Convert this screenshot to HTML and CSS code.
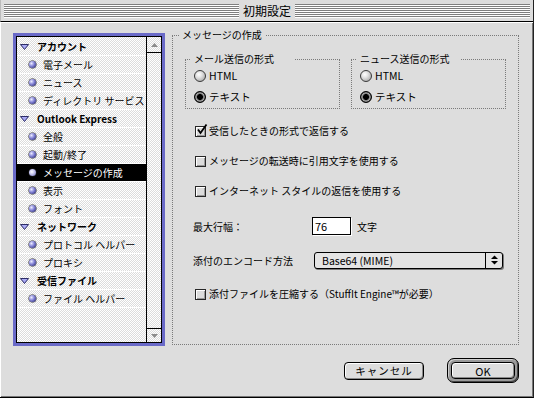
FILE: index.html
```html
<!DOCTYPE html>
<html lang="ja">
<head>
<meta charset="utf-8">
<title>初期設定</title>
<link rel="stylesheet" href="styles.css">
</head>
<body>
<div class="window">
  <div class="titlebar"><span class="title">初期設定</span></div>
  <div class="content">
    <div class="listbox">
      <div class="listinner">
        <ul class="list">
          <li class="hdr"><svg class="tri" width="9" height="6" viewBox="0 0 9 6"><polygon points="0.5,0.5 8.5,0.5 4.5,5.5" fill="#a8a8f4" stroke="#2c2c66" stroke-width="1"/></svg>アカウント</li>
          <li class="item"><span class="dot"></span>電子メール</li>
          <li class="item"><span class="dot"></span>ニュース</li>
          <li class="item"><span class="dot"></span>ディレクトリ サービス</li>
          <li class="hdr latin"><svg class="tri" width="9" height="6" viewBox="0 0 9 6"><polygon points="0.5,0.5 8.5,0.5 4.5,5.5" fill="#a8a8f4" stroke="#2c2c66" stroke-width="1"/></svg>Outlook Express</li>
          <li class="item"><span class="dot"></span>全般</li>
          <li class="item"><span class="dot"></span>起動/終了</li>
          <li class="item sel"><span class="dot"></span>メッセージの作成</li>
          <li class="item"><span class="dot"></span>表示</li>
          <li class="item"><span class="dot"></span>フォント</li>
          <li class="hdr"><svg class="tri" width="9" height="6" viewBox="0 0 9 6"><polygon points="0.5,0.5 8.5,0.5 4.5,5.5" fill="#a8a8f4" stroke="#2c2c66" stroke-width="1"/></svg>ネットワーク</li>
          <li class="item"><span class="dot"></span>プロトコル ヘルパー</li>
          <li class="item"><span class="dot"></span>プロキシ</li>
          <li class="hdr"><svg class="tri" width="9" height="6" viewBox="0 0 9 6"><polygon points="0.5,0.5 8.5,0.5 4.5,5.5" fill="#a8a8f4" stroke="#2c2c66" stroke-width="1"/></svg>受信ファイル</li>
          <li class="item"><span class="dot"></span>ファイル ヘルパー</li>
        </ul>
        <div class="scroll">
          <div class="sarrow up"><svg width="7" height="4" viewBox="0 0 7 4"><polygon points="0,4 3.5,0 7,4" fill="#8c8c8c"/></svg></div>
          <div class="track"></div>
          <div class="sarrow down"><svg width="7" height="4" viewBox="0 0 7 4"><polygon points="0,0 7,0 3.5,4" fill="#8c8c8c"/></svg></div>
        </div>
      </div>
    </div>

    <div class="group main">
      <span class="legend">メッセージの作成</span>
      <div class="formats">
        <div class="group sub">
          <span class="legend">メール送信の形式</span>
          <div class="radio-row"><span class="radio"></span>HTML</div>
          <div class="radio-row"><span class="radio on"></span>テキスト</div>
        </div>
        <div class="group sub">
          <span class="legend">ニュース送信の形式</span>
          <div class="radio-row"><span class="radio"></span>HTML</div>
          <div class="radio-row"><span class="radio on"></span>テキスト</div>
        </div>
      </div>
      <div class="opts">
        <div class="check-row first"><span class="check on"><svg class="mark" width="12" height="12" viewBox="0 0 12 12"><polyline points="2,5.5 4.5,9 10.5,0.5" fill="none" stroke="#000" stroke-width="1.8"/></svg></span>受信したときの形式で返信する</div>
        <div class="check-row"><span class="check"></span>メッセージの転送時に引用文字を使用する</div>
        <div class="check-row"><span class="check"></span>インターネット スタイルの返信を使用する</div>
        <div class="field-row width-row"><span class="flabel">最大行幅：</span><span class="input">76</span><span class="unit">文字</span></div>
        <div class="field-row enc-row"><span class="flabel">添付のエンコード方法</span><span class="popup"><span class="ptext">Base64 (MIME)</span><span class="parrows"><svg width="7" height="12" viewBox="0 0 7 12"><polygon points="0,5 3.5,1.5 7,5" fill="#000"/><polygon points="0,7 7,7 3.5,10.5" fill="#000"/></svg></span></span></div>
        <div class="check-row last"><span class="check"></span>添付ファイルを圧縮する（StuffIt Engine™が必要）</div>
      </div>
    </div>

    <div class="buttons">
      <span class="btn cancel">キャンセル</span>
      <span class="default"><span class="btn ok">OK</span></span>
    </div>
  </div>
</div>
</body>
</html>
```

FILE: styles.css
```css
html, body {
  margin: 0;
  padding: 0;
  background: #dddddd;
}

body {
  font-family: "Noto Sans CJK JP", "Noto Sans", sans-serif;
  font-size: 10px;
  color: #000;
}

.window {
  width: 534px;
  height: 398px;
  box-sizing: border-box;
  background: #dddddd;
  border-right: 1px solid #222;
  border-bottom: 1px solid #000;
  display: flex;
  flex-direction: column;
}

/* title bar */
.titlebar {
  box-sizing: border-box;
  border-bottom: 1px solid #000;
  border-left: 1px solid #bbb;
  display: flex;
  align-items: flex-start;
  padding: 4px 3px 0 3px;
  flex: none;
  height: 22px;
}
.titlebar::before,
.titlebar::after {
  content: "";
  flex: 1;
  height: 14px;
  background: repeating-linear-gradient(to bottom, #7f7f7f 0 1px, #ffffff 1px 2px);
}
.title {
  padding: 0 4px;
  font-size: 12px;
  line-height: 14px;
  height: 14px;
}

/* main content */
.content {
  flex: 1;
  display: grid;
  grid-template-columns: 152px 347px;
  grid-template-rows: 313px auto;
  column-gap: 7px;
  padding: 11px 12px 0 13px;
  box-shadow: inset 1px 1px 0 #ffffff, inset -1px -1px 0 #777;
}

/* list box */
.listbox {
  border: 3px solid #6a6ac8;
  box-sizing: border-box;
  width: 152px;
  height: 313px;
}
.listinner {
  border: 1px solid #000;
  height: 100%;
  box-sizing: border-box;
  display: flex;
  background-color: #fff;
  background-image: conic-gradient(#dcdcdc 25%, #fff 0 50%, #dcdcdc 0 75%, #fff 0);
  background-size: 2px 2px;
}
.list {
  list-style: none;
  margin: 0;
  padding: 1px 0 0 0;
  width: 129px;
}
.list li {
  height: 17px;
  line-height: 17px;
  border-bottom: 1px solid #fff;
  display: flex;
  align-items: center;
  white-space: nowrap;
}
.hdr {
  padding-left: 3px;
  font-weight: bold;
}
.tri {
  margin-right: 8px;
  flex: none;
}
.item {
  padding-left: 12px;
}
.dot {
  width: 7px;
  height: 7px;
  border-radius: 50%;
  margin-right: 7px;
  flex: none;
  background: radial-gradient(circle at 35% 35%, #eeeeff 0, #8c8cdc 40%, #3a3a8a 80%, #1e1e50 100%);
  box-shadow: 0 0 0 0.5px #222;
}
.item.sel {
  background: #000;
  color: #fff;
}
.item.sel .dot {
  background: radial-gradient(circle at 40% 40%, #ffffff 0, #c8c8f0 40%, #6e6eb8 100%);
}

.scroll {
  width: 14px;
  border-left: 1px solid #000;
  display: flex;
  flex-direction: column;
}
.sarrow {
  display: flex;
  align-items: center;
  justify-content: center;
  flex: none;
}
.sarrow.up {
  height: 15px;
  border-bottom: 1px solid #000;
}
.sarrow.down {
  height: 13px;
  border-top: 1px solid #000;
}
.track {
  flex: 1;
}

/* group boxes */
.group {
  border: 1px dotted #7a7a7a;
  box-sizing: border-box;
}
.legend {
  display: block;
  width: fit-content;
  background: #dddddd;
  line-height: 12px;
  height: 12px;
  white-space: nowrap;
  margin-top: -7px;
}
.main {
  margin-top: 2px;
  height: 310px;
}
.main > .legend {
  margin-left: 7px;
  padding: 0 3px 0 2px;
}
.formats {
  margin-top: 18px;
  display: grid;
  grid-template-columns: 155px 155px;
  column-gap: 11px;
  padding: 0 12px;
}
.sub {
  height: 50px;
}
.sub > .legend {
  margin-left: 5px;
  padding-left: 3px;
  width: 104px;
  box-sizing: border-box;
}
.radio-row {
  height: 21px;
  display: flex;
  align-items: center;
  padding-left: 8px;
  font-size: 10.5px;
}
.radio {
  width: 12px;
  height: 12px;
  border-radius: 50%;
  box-sizing: border-box;
  margin-right: 3px;
  flex: none;
  border: 1px solid #3a3a3a;
  background: radial-gradient(circle at 38% 35%, #ffffff 0, #e2e2e2 35%, #a8a8a8 85%, #888 100%);
}
.radio.on {
  border: 1px solid #000;
  background: radial-gradient(circle, #000 0 2.6px, #6a6a6a 3.2px, #b4b4b4 4.2px, #3c3c3c 5px);
}

.opts {
  padding-left: 20px;
}
.check-row {
  height: 14px;
  line-height: 14px;
  display: flex;
  align-items: center;
  white-space: nowrap;
  margin-top: 16px;
}
.check-row.first {
  margin-top: 15px;
}
.check-row.last {
  margin-top: 18px;
}
.check {
  position: relative;
  width: 11px;
  height: 11px;
  box-sizing: border-box;
  margin: 0 3px 0 2px;
  flex: none;
  border: 1px solid #262626;
  background: #dcdcdc;
  box-shadow: inset 1px 1px 0 #fff, inset -1px -1px 0 #9a9a9a;
}
.mark {
  position: absolute;
  left: 0;
  top: -3px;
  overflow: visible;
}

.field-row {
  display: flex;
  align-items: center;
  height: 18px;
  white-space: nowrap;
}
.width-row {
  margin-top: 19px;
}
.enc-row {
  margin-top: 16px;
}
.flabel {
  width: 119px;
  flex: none;
}
.input {
  width: 39px;
  height: 18px;
  box-sizing: border-box;
  border: 1px solid #000;
  box-shadow: 1px 1px 0 #fff;
  background: #fff;
  font-size: 11px;
  line-height: 16px;
  padding-left: 2px;
}
.unit {
  margin-left: 6px;
}
.popup {
  margin-left: 2px;
  width: 189px;
  height: 17px;
  box-sizing: border-box;
  border: 1px solid #000;
  border-radius: 3px;
  box-shadow: 1px 1px 0 #7a7a7a;
  background: #e4e4e4;
  display: flex;
  align-items: center;
}
.ptext {
  flex: 1;
  padding-left: 7px;
  font-size: 10.5px;
  line-height: 15px;
}
.parrows {
  width: 16px;
  height: 100%;
  border-left: 1px solid #000;
  display: flex;
  align-items: center;
  justify-content: center;
}

/* buttons */
.buttons {
  grid-column: 1 / -1;
  margin-top: 12px;
  display: flex;
  justify-content: flex-end;
  align-items: center;
  align-self: start;
}
.btn {
  display: flex;
  align-items: center;
  justify-content: center;
  box-sizing: border-box;
  border: 1px solid #000;
  border-radius: 4px;
  background: #dddddd;
  box-shadow: inset 1px 1px 0 #fff, inset -1px -1px 0 #8a8a8a;
  white-space: nowrap;
}
.cancel {
  width: 80px;
  height: 18px;
  margin-right: 23px;
  font-size: 10.5px;
  letter-spacing: 1px;
}
.default {
  display: flex;
  width: 72px;
  height: 25px;
  box-sizing: border-box;
  border: 1px solid #000;
  border-radius: 7px;
  padding: 3px;
  background: #9a9a9a;
  box-shadow: inset 1px 1px 0 #cfcfcf, inset -1px -1px 0 #444;
}
.ok {
  width: 64px;
  height: 17px;
  font-size: 11px;
}
```
